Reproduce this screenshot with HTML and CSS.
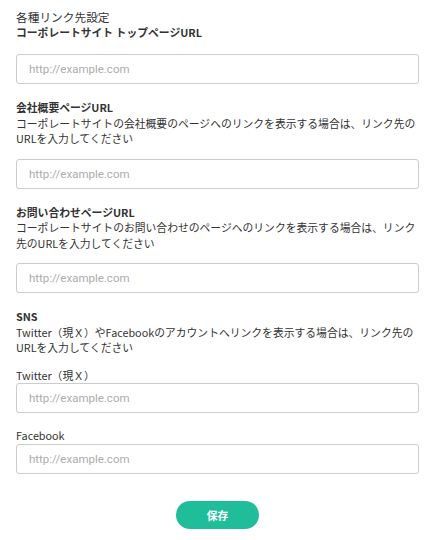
FILE: index.html
```html
<!DOCTYPE html>
<html lang="ja">
<head>
<meta charset="utf-8">
<title>各種リンク先設定</title>
<link rel="stylesheet" href="styles.css">
</head>
<body>
<main class="page">
  <section class="section section-first">
    <h1 class="page-title">各種リンク先設定</h1>
    <h2 class="heading">コーポレートサイト トップページURL</h2>
    <input class="url-input" type="text" placeholder="http://example.com">
  </section>

  <section class="section">
    <h2 class="heading">会社概要ページURL</h2>
    <p class="desc">コーポレートサイトの会社概要のページへのリンクを表示する場合は、リンク先のURLを入力してください</p>
    <input class="url-input" type="text" placeholder="http://example.com">
  </section>

  <section class="section">
    <h2 class="heading">お問い合わせページURL</h2>
    <p class="desc">コーポレートサイトのお問い合わせのページへのリンクを表示する場合は、リンク先のURLを入力してください</p>
    <input class="url-input" type="text" placeholder="http://example.com">
  </section>

  <section class="section">
    <h2 class="heading">SNS</h2>
    <p class="desc">Twitter（現Ｘ）やFacebookのアカウントへリンクを表示する場合は、リンク先のURLを入力してください</p>
    <label class="sub-label sub-first">Twitter（現Ｘ）</label>
    <input class="url-input url-tight" type="text" placeholder="http://example.com">
    <label class="sub-label sub-second">Facebook</label>
    <input class="url-input url-tight" type="text" placeholder="http://example.com">
  </section>

  <div class="actions">
    <button class="save-btn" type="button">保存</button>
  </div>
</main>
</body>
</html>
```

FILE: styles.css
```css
* { box-sizing: border-box; }

html, body {
  margin: 0;
  padding: 0;
  background: #ffffff;
}

body {
  font-family: "Noto Sans CJK JP", "Noto Sans", sans-serif;
  color: #333333;
}

.page {
  display: flex;
  flex-direction: column;
  padding: 9px 16px 0 16px;
}

.section {
  display: flex;
  flex-direction: column;
  margin-top: 16px;
}

.section-first {
  margin-top: 0;
}

.page-title {
  margin: 0;
  font-size: 11.7px;
  line-height: 16px;
  font-weight: 400;
  color: #333333;
}

.heading {
  margin: 0;
  font-size: 10.8px;
  line-height: 15.5px;
  font-weight: 700;
  color: #333333;
}

.desc {
  margin: 0;
  font-size: 10.8px;
  line-height: 15.5px;
  font-weight: 400;
  color: #333333;
}

.url-input {
  display: block;
  width: 100%;
  height: 30px;
  margin: 12px 0 0 0;
  padding: 0 12px;
  border: 1px solid #cccccc;
  border-radius: 3px;
  background: #ffffff;
  font-family: Roboto, "Liberation Sans", sans-serif;
  font-size: 11.5px;
  color: #333333;
  outline: none;
}

.section-first .url-input {
  margin-top: 13.5px;
}

.url-input::placeholder {
  color: #acacac;
}

.url-input.url-tight {
  margin-top: 0;
}

.sub-label {
  display: block;
  font-size: 10.8px;
  line-height: 15.5px;
  font-weight: 400;
  color: #333333;
}

.sub-first {
  margin-top: 12px;
}

.sub-second {
  margin-top: 15px;
}

.actions {
  display: flex;
  justify-content: center;
  margin-top: 27px;
}

.save-btn {
  width: 83px;
  height: 28px;
  border: none;
  border-radius: 14px;
  background: #1fbd9a;
  color: #ffffff;
  font-family: "Noto Sans CJK JP", sans-serif;
  font-size: 10.8px;
  font-weight: 700;
  padding: 0;
  cursor: pointer;
}
```
